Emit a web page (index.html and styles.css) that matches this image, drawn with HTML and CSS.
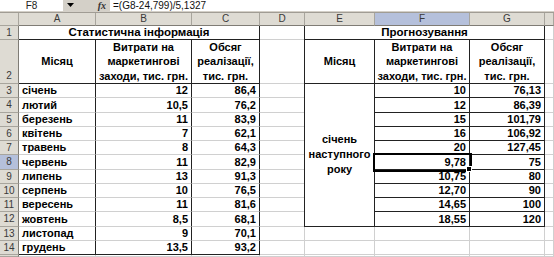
FILE: index.html
```html
<!DOCTYPE html>
<html>
<head>
<meta charset="utf-8">
<link rel="stylesheet" href="styles.css">
</head>
<body>
<div class="fbar">
  <div class="namebox">F8</div>
  <div class="drop"><svg width="7" height="4" viewBox="0 0 7 4"><path d="M0 0h7L3.5 4z" fill="#000"/></svg></div>
  <div class="fx">fx</div>
  <div class="formula">=(G8-24,799)/5,1327</div>
</div>
<div class="sheet">
  <div class="hd corner"></div>
  <div class="hd col">A</div>
  <div class="hd col">B</div>
  <div class="hd col">C</div>
  <div class="hd col">D</div>
  <div class="hd col">E</div>
  <div class="hd col sel">F</div>
  <div class="hd col">G</div>
  <div class="hd col"></div>

  <div class="hd row">1</div><div class="c"></div><div class="c"></div>
  <div class="hd row tall">2</div><div class="c"></div><div class="c"></div>
  <div class="hd row">3</div><div class="c"></div><div class="c"></div>
  <div class="hd row">4</div><div class="c"></div><div class="c"></div>
  <div class="hd row">5</div><div class="c"></div><div class="c"></div>
  <div class="hd row">6</div><div class="c"></div><div class="c"></div>
  <div class="hd row">7</div><div class="c"></div><div class="c"></div>
  <div class="hd row sel">8</div><div class="c"></div><div class="c"></div>
  <div class="hd row">9</div><div class="c"></div><div class="c"></div>
  <div class="hd row">10</div><div class="c"></div><div class="c"></div>
  <div class="hd row">11</div><div class="c"></div><div class="c"></div>
  <div class="hd row">12</div><div class="c"></div><div class="c"></div>
  <div class="hd row">13</div><div class="c"></div><div class="c"></div><div class="c"></div><div class="c"></div><div class="c"></div>
  <div class="hd row">14</div><div class="c"></div><div class="c"></div><div class="c"></div><div class="c"></div><div class="c"></div>
  <div class="hd row"></div><div class="c"></div><div class="c"></div><div class="c"></div><div class="c"></div><div class="c"></div><div class="c"></div><div class="c"></div><div class="c"></div>

  <div class="tbl tl">
    <div class="t title">Статистична інформація</div>
    <div class="t hcell">Місяц</div>
    <div class="t hcell">Витрати на маркетингові заходи, тис. грн.</div>
    <div class="t hcell">Обсяг реалізації, тис. грн.</div>

    <div class="t m">січень</div><div class="t n">12</div><div class="t n">86,4</div>
    <div class="t m">лютий</div><div class="t n">10,5</div><div class="t n">76,2</div>
    <div class="t m">березень</div><div class="t n">11</div><div class="t n">83,9</div>
    <div class="t m">квітень</div><div class="t n">7</div><div class="t n">62,1</div>
    <div class="t m">травень</div><div class="t n">8</div><div class="t n">64,3</div>
    <div class="t m">червень</div><div class="t n">11</div><div class="t n">82,9</div>
    <div class="t m">липень</div><div class="t n">13</div><div class="t n">91,3</div>
    <div class="t m">серпень</div><div class="t n">10</div><div class="t n">76,5</div>
    <div class="t m">вересень</div><div class="t n">11</div><div class="t n">81,6</div>
    <div class="t m">жовтень</div><div class="t n">8,5</div><div class="t n">68,1</div>
    <div class="t m">листопад</div><div class="t n">9</div><div class="t n">70,1</div>
    <div class="t m last">грудень</div><div class="t n last">13,5</div><div class="t n last">93,2</div>
  </div>

  <div class="tbl tr">
    <div class="t title">Прогнозування</div>
    <div class="t hcell">Місяц</div>
    <div class="t hcell">Витрати на маркетингові заходи, тис. грн.</div>
    <div class="t hcell">Обсяг реалізації, тис. грн.</div>
    <div class="t merged">січень наступного року</div>
    <div class="t n b">10</div><div class="t n b">76,13</div>
    <div class="t n b">12</div><div class="t n b">86,39</div>
    <div class="t n b">15</div><div class="t n b">101,79</div>
    <div class="t n b">16</div><div class="t n b">106,92</div>
    <div class="t n b">20</div><div class="t n b">127,45</div>
    <div class="t n b active">9,78</div><div class="t n b">75</div>
    <div class="t n b">10,75</div><div class="t n b">80</div>
    <div class="t n b">12,70</div><div class="t n b">90</div>
    <div class="t n b">14,65</div><div class="t n b">100</div>
    <div class="t n b">18,55</div><div class="t n b">120</div>
  </div>
</div>
</body>
</html>
```
FILE: styles.css
```css
html, body {
  margin: 0;
  padding: 0;
  background: #fff;
}
body {
  width: 554px;
  height: 257px;
  overflow: hidden;
  font-family: "Liberation Sans", Arial, sans-serif;
  color: #000;
}

/* formula bar */
.fbar {
  display: flex;
  height: 13px;
  box-sizing: border-box;
  background: #d4d0c8;
  border-bottom: 1px solid #a09c94;
}
.namebox {
  width: 63px;
  height: 11px;
  background: #fff;
  font-size: 10px;
  line-height: 11px;
  text-align: center;
  color: #222;
}
.drop {
  width: 14px;
  display: flex;
  align-items: center;
  justify-content: center;
  padding-bottom: 2px;
}
.fx {
  width: 33px;
  font-family: "Liberation Serif", serif;
  font-style: italic;
  font-weight: bold;
  font-size: 10px;
  line-height: 11px;
  text-align: right;
  padding-right: 4px;
  box-sizing: border-box;
  color: #333;
}
.formula {
  flex: 1;
  height: 11px;
  background: #fff;
  font-size: 10px;
  line-height: 11px;
  padding-left: 3px;
  color: #111;
}

/* sheet grid */
.sheet {
  display: grid;
  height: 244px;
  grid-template-columns: 19px 77px 96px 68px 45px 70px 95px 75px 1fr;
  grid-template-rows: 13px 14px 44px 14px 15px 14px 14px 14px 15px 14px 14px 14px 15px 14px 14px 1fr;
}
.sheet > div {
  box-sizing: border-box;
}
.c {
  border-right: 1px solid #d0d0d0;
  border-bottom: 1px solid #d0d0d0;
}
.hd {
  background: #dedbd3;
  border-right: 1px solid #a8a59d;
  border-bottom: 1px solid #a8a59d;
  font-size: 10px;
  color: #3a3a3a;
  display: flex;
  align-items: center;
  justify-content: center;
  line-height: 12px;
}
.hd.col {
  border-bottom-color: #7f7c75;
}
.hd.row {
  border-right-color: #7f7c75;
}
.hd.row.tall {
  align-items: flex-end;
  padding-bottom: 1px;
}
.hd.sel {
  background: #b5c0db;
}

/* tables */
.tbl {
  display: grid;
  font-weight: bold;
  font-size: 11px;
}
.tbl .t {
  box-sizing: border-box;
  border-right: 1px solid #222;
  border-bottom: 1px solid #222;
  display: flex;
  align-items: center;
  line-height: 13px;
  white-space: nowrap;
}
.tl {
  grid-column: 2 / 5;
  grid-row: 2 / 16;
  grid-template-columns: 77px 96px 68px;
  grid-template-rows: 14px 44px 14px 15px 14px 14px 14px 15px 14px 14px 14px 15px 14px 14px;
}
.tr {
  grid-column: 6 / 9;
  grid-row: 2 / 14;
  margin-left: -1px;
  border-left: 1px solid #222;
  grid-template-columns: 70px 95px 75px;
  grid-template-rows: 14px 44px 14px 15px 14px 14px 14px 15px 14px 14px 14px 15px;
}
.t.title {
  grid-column: 1 / 4;
  justify-content: center;
  font-size: 11.5px;
}
.t.hcell {
  justify-content: center;
  text-align: center;
  white-space: normal;
  line-height: 14.5px;
  padding: 0 1px;
}
.t.m {
  padding-left: 3px;
  border-bottom-color: #d0d0d0;
}
.t.n {
  justify-content: flex-end;
  padding-right: 3px;
  border-bottom-color: #d0d0d0;
}
.t.n.b {
  border-bottom-color: #222;
}
.t.last {
  border-bottom-color: #222;
}
.t.merged {
  grid-column: 1;
  grid-row: 3 / 13;
  justify-content: center;
  text-align: center;
  white-space: normal;
  line-height: 15px;
  padding: 0 6px 2px;
}
.t.active {
  position: relative;
  outline: 2px solid #000;
}
.t.active::after {
  content: "";
  position: absolute;
  right: -3px;
  bottom: -3px;
  width: 4px;
  height: 4px;
  background: #000;
  border: 1px solid #fff;
}
```
